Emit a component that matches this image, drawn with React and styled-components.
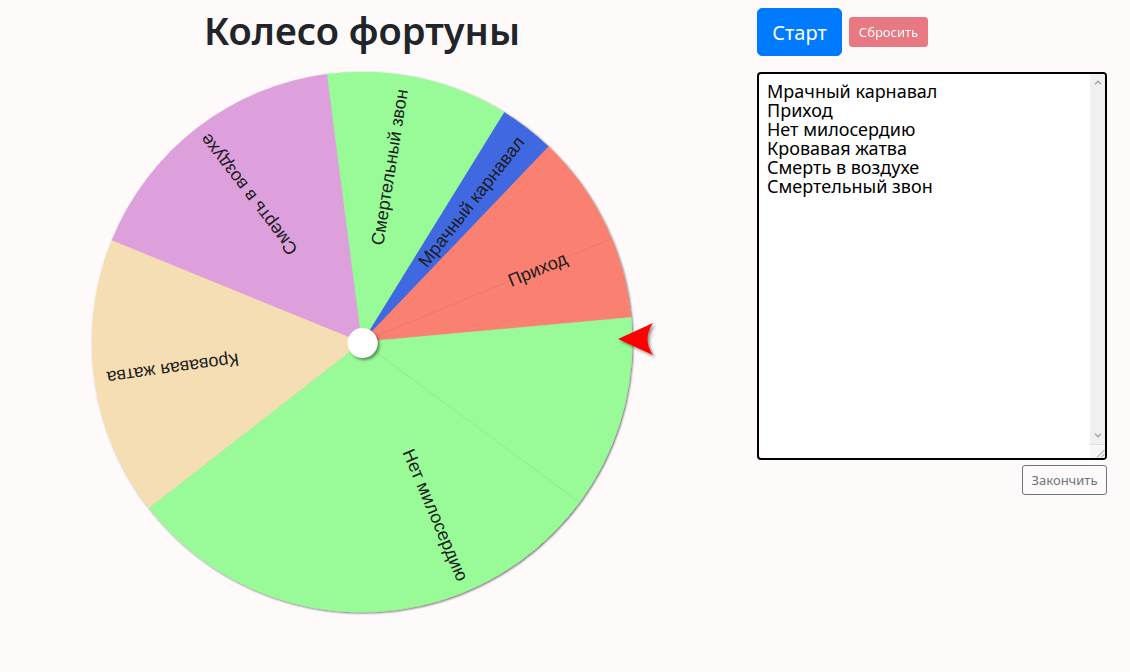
import React from "react";
import styled, { createGlobalStyle } from "styled-components";

// angles in degrees, counter-clockwise from the pointer side (3 o'clock)
const items = [
  { label: "Мрачный карнавал", color: "#4169e1", from: 46.3, to: 58.3, textAt: 52, textR: 178 },
  { label: "Приход", color: "#fa8072", from: 5.2, to: 46.3, textAt: 22.4, textR: 190, seams: [22.5] },
  { label: "Нет милосердию", color: "#98fb98", from: -142.1, to: 5.2, textAt: -67, textR: 188, seams: [-36.4] },
  { label: "Кровавая жатва", color: "#f5deb3", from: 157.8, to: 217.9, textAt: 188, textR: 191 },
  { label: "Смерть в воздухе", color: "#dda0dd", from: 97.4, to: 157.8, textAt: 127.5, textR: 186 },
  { label: "Смертельный звон", color: "#98fb98", from: 58.3, to: 97.4, textAt: 81, textR: 177 },
];

const CX = 300;
const CY = 280;
const R = 270;

const point = (deg, r = R) => {
  const a = (deg * Math.PI) / 180;
  return [CX + r * Math.cos(a), CY - r * Math.sin(a)];
};

const slicePath = (from, to) => {
  const [x1, y1] = point(from);
  const [x2, y2] = point(to);
  const large = to - from > 180 ? 1 : 0;
  return `M${CX} ${CY} L${x1} ${y1} A${R} ${R} 0 ${large} 0 ${x2} ${y2} Z`;
};

const GlobalStyle = createGlobalStyle`
  body {
    margin: 0;
    background: #fffafa;
    font-family: "Noto Sans", "Open Sans", sans-serif;
    color: #212529;
  }
`;

const Page = styled.div`
  display: flex;
  align-items: flex-start;
`;

const WheelColumn = styled.div`
  width: 724px;
  display: flex;
  flex-direction: column;
  align-items: center;
`;

const Title = styled.h1`
  margin: 7px 0 0;
  font-size: 38px;
  line-height: 47px;
  font-weight: 600;
  color: #212529;
`;

const WheelSvg = styled.svg`
  display: block;
  margin-top: 8px;
`;

const SliceLabel = styled.text`
  font-family: "Liberation Sans", Arial, sans-serif;
  font-size: 18px;
  fill: #1c1c1c;
`;

const Controls = styled.div`
  margin-left: 33px;
  width: 350px;
  padding-top: 8px;
  display: flex;
  flex-direction: column;
`;

const ButtonRow = styled.div`
  display: flex;
  align-items: center;
  gap: 7px;
`;

const Button = styled.button`
  font-family: inherit;
  border: 1px solid transparent;
  cursor: pointer;
  display: flex;
  align-items: center;
  justify-content: center;
  padding: 0;
`;

const StartButton = styled(Button)`
  width: 85px;
  height: 48px;
  font-size: 20px;
  border-radius: 5px;
  background: #007bff;
  border-color: #007bff;
  color: #fff;
`;

const ResetButton = styled(Button)`
  width: 79px;
  height: 30px;
  font-size: 13px;
  border-radius: 3px;
  background: #dc3545;
  border-color: #dc3545;
  color: #fff;
  opacity: 0.65;
`;

const AreaFrame = styled.div`
  box-sizing: border-box;
  margin-top: 16px;
  width: 350px;
  height: 388px;
  border: 2px solid #000;
  border-radius: 4px;
  background: #fff;
  display: flex;
  overflow: hidden;
`;

const ItemsArea = styled.textarea`
  flex: 1;
  min-width: 0;
  border: none;
  padding: 8px 8px 6px;
  margin: 0;
  font-family: "Noto Sans", "Open Sans", sans-serif;
  font-size: 18px;
  line-height: 19px;
  color: #000;
  background: transparent;
  overflow: hidden;
  resize: none;
  outline: none;
`;

const ScrollTrack = styled.div`
  width: 15px;
  background: #f0f0f0;
  display: flex;
  flex-direction: column;
  justify-content: space-between;
  align-items: center;
`;

const ScrollArrow = styled.div`
  width: 15px;
  height: 17px;
  display: flex;
  align-items: center;
  justify-content: center;
`;

const TrackBottom = styled.div`
  display: flex;
  flex-direction: column;
  align-items: center;
`;

const Resizer = styled.div`
  width: 15px;
  height: 14px;
  box-sizing: border-box;
  border-top: 1px solid #dcdcdc;
  background: #f7f7f7;
  display: flex;
  align-items: flex-end;
  justify-content: flex-end;
`;

const Chevron = ({ down }) => (
  <svg width="8" height="5" viewBox="0 0 8 5">
    <path
      d={down ? "M1 0.8 L4 3.8 L7 0.8" : "M1 4.2 L4 1.2 L7 4.2"}
      fill="none"
      stroke="#a3a3a3"
      strokeWidth="1.4"
    />
  </svg>
);

function Wheel() {
  return (
    <WheelSvg width="600" height="560" viewBox="0 0 600 560">
      <defs>
        <filter id="rim" x="-10%" y="-10%" width="120%" height="120%">
          <feDropShadow dx="1" dy="1" stdDeviation="0.8" floodColor="#000" floodOpacity="0.6" />
        </filter>
        <filter id="soft" x="-50%" y="-50%" width="200%" height="200%">
          <feDropShadow dx="2" dy="2" stdDeviation="1.5" floodColor="#000" floodOpacity="0.45" />
        </filter>
      </defs>
      <g filter="url(#rim)">
        {items.map((it) => (
          <path key={it.label} d={slicePath(it.from, it.to)} fill={it.color} stroke={it.color} strokeWidth="0.6" />
        ))}
      </g>
      {items.flatMap((it) =>
        (it.seams || []).map((s) => {
          const [x, y] = point(s);
          return <line key={it.label + s} x1={CX} y1={CY} x2={x} y2={y} stroke="#000" strokeOpacity="0.06" strokeWidth="1" />;
        })
      )}
      {items.map((it) => (
        <SliceLabel
          key={it.label}
          x={CX + it.textR}
          y={CY}
          textAnchor="middle"
          dominantBaseline="central"
          transform={`rotate(${-it.textAt} ${CX} ${CY})`}
        >
          {it.label}
        </SliceLabel>
      ))}
      <circle cx={CX + 0.5} cy={CY + 1} r="15" fill="#fff" filter="url(#soft)" />
      <path d="M556 277 L591 261 Q580 277 591 293 Z" fill="#ff0000" filter="url(#soft)" />
    </WheelSvg>
  );
}

export default function App() {
  return (
    <>
      <GlobalStyle />
      <Page>
        <WheelColumn>
          <Title>Колесо фортуны</Title>
          <Wheel />
        </WheelColumn>
        <Controls>
          <ButtonRow>
            <StartButton>Старт</StartButton>
            <ResetButton disabled>Сбросить</ResetButton>
          </ButtonRow>
          <AreaFrame>
            <ItemsArea
              spellCheck={false}
              defaultValue={items.map((it) => it.label).join("\n")}
            />
            <ScrollTrack>
              <ScrollArrow>
                <Chevron />
              </ScrollArrow>
              <TrackBottom>
                <ScrollArrow>
                  <Chevron down />
                </ScrollArrow>
                <Resizer>
                  <svg width="9" height="9" viewBox="0 0 9 9">
                    <path d="M8.5 1 L1 8.5 M8.5 5 L5 8.5" stroke="#8a8a8a" strokeWidth="1" />
                  </svg>
                </Resizer>
              </TrackBottom>
            </ScrollTrack>
          </AreaFrame>
          <FinishRow>
            <FinishButton>Закончить</FinishButton>
          </FinishRow>
        </Controls>
      </Page>
    </>
  );
}

const FinishRow = styled.div`
  display: flex;
  justify-content: flex-end;
  margin-top: 5px;
`;

const FinishButton = styled(Button)`
  width: 85px;
  height: 30px;
  font-size: 13px;
  border-radius: 3px;
  background: transparent;
  border-color: #6c757d;
  color: #6c757d;
`;
